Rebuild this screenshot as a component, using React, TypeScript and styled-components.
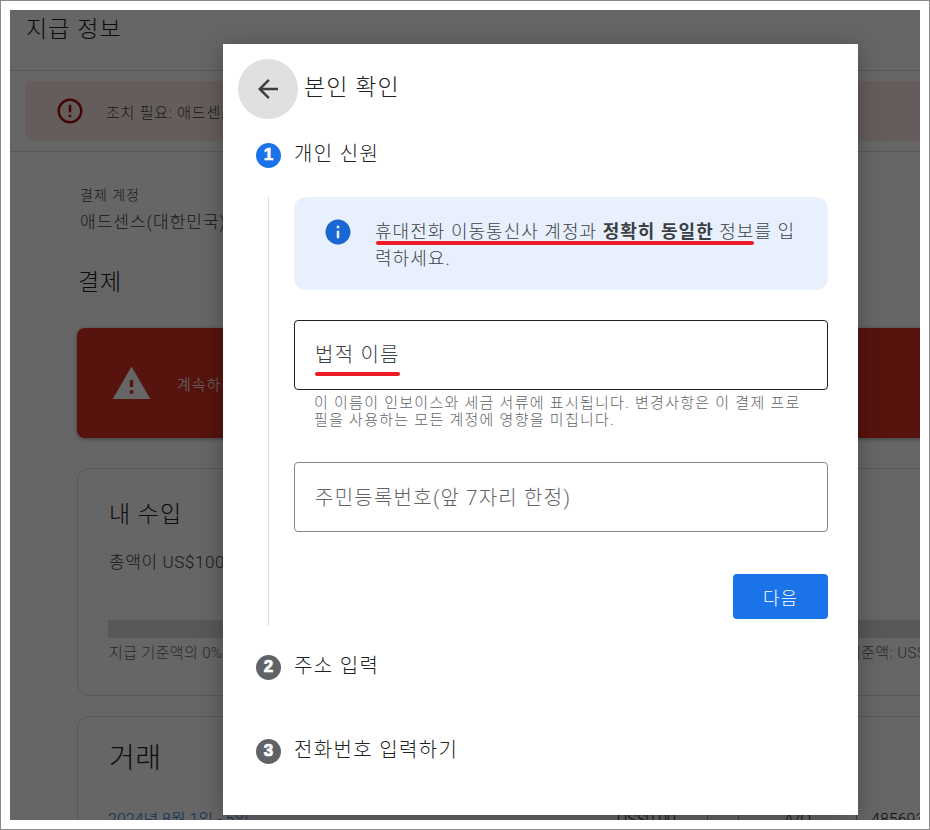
import React from "react";
import styled, { createGlobalStyle } from "styled-components";

const Global = createGlobalStyle`
  html, body { margin: 0; padding: 0; background: #fff; }
  * { box-sizing: border-box; }
  body { font-family: Roboto, "Noto Sans CJK KR", "Liberation Sans", sans-serif; font-weight: 300; }
  strong { font-weight: 700; }
`;

const Frame = styled.div`
  width: 930px;
  height: 830px;
  border: 1px solid #8a8a8a;
  padding: 9px;
  background: #fff;
`;

const Page = styled.div`
  position: relative;
  width: 910px;
  height: 810px;
  overflow: hidden;
  background: #fff;
  color: #202124;
`;

const PageHeader = styled.header`
  height: 61px;
  padding: 2px 16px 0;
  border-bottom: 1px solid #dadce0;
  font-size: 23px;
  letter-spacing: 1.1px;
  line-height: 36px;
`;

const AlertBand = styled.div`
  height: 81px;
  padding: 10px 0 10px 15px;
  border-bottom: 1px solid #dadce0;
`;

const AlertBox = styled.div`
  display: flex;
  align-items: center;
  gap: 21px;
  height: 60px;
  padding-left: 30px;
  width: 1000px;
  border-radius: 8px;
  background: #fce8e6;
  font-size: 15px;
  letter-spacing: 0.8px;
  color: #3c4043;
`;

const Content = styled.main`
  width: 1000px;
  padding: 33px 0 0 67px;
`;

const AccountLabel = styled.div`
  margin-left: 3px;
  font-size: 14px;
  letter-spacing: 1px;
  line-height: 20px;
  color: #3c4043;
`;

const AccountName = styled.div`
  margin-left: 3px;
  margin-top: 6px;
  font-size: 17px;
  letter-spacing: 1px;
  line-height: 22px;
  color: #3c4043;
`;

const SectionTitle = styled.h2`
  margin: 33px 0 0 1px;
  font-size: 23px;
  font-weight: 300;
  letter-spacing: 0.8px;
  line-height: 34px;
`;

const DangerBox = styled.div`
  display: flex;
  align-items: center;
  gap: 25px;
  height: 110px;
  margin-top: 28px;
  padding-left: 34px;
  border-radius: 8px;
  background: #d93025;
  color: #fff;
  font-size: 15px;
  letter-spacing: 1px;
  box-shadow: 0 1px 4px rgba(0, 0, 0, 0.4);
`;

const Card = styled.section`
  margin-top: ${(p: { $top: number }) => p.$top}px;
  padding: 26px 0 0 31px;
  border: 1px solid #dadce0;
  border-radius: 12px;
`;

const EarnCard = styled(Card)`
  height: 228px;
  padding-right: 36px;
`;

const CardTitle = styled.h3`
  margin: 0;
  font-size: 23px;
  font-weight: 300;
  letter-spacing: 1px;
  line-height: 40px;
`;

const TotalLine = styled.div`
  margin-top: 12px;
  font-size: 17px;
  letter-spacing: 0.6px;
  line-height: 30px;
  color: #3c4043;
`;

const ProgressBar = styled.div`
  height: 18px;
  margin: 43px -37px 0 -1px;
  background: #dcdcdc;
`;

const ProgressLabels = styled.div`
  display: flex;
  justify-content: space-between;
  margin-top: 4px;
  font-size: 15px;
  letter-spacing: 0.4px;
  line-height: 22px;
  color: #5f6368;
`;

const TxCard = styled(Card)`
  height: 140px;
  padding-top: 22px;
`;

const TxTitle = styled.h3`
  margin: 0;
  font-size: 28px;
  font-weight: 300;
  letter-spacing: 0.5px;
  line-height: 40px;
`;

const TxRow = styled.div`
  display: grid;
  grid-template-columns: 598px 31px 118px 1fr;
  height: 30px;
  margin-top: 29px;
  font-size: 16px;
  line-height: 24px;
`;

const TxDateCell = styled.div`
  display: flex;
  justify-content: space-between;
  padding-right: 31px;
  margin-left: -1px;
`;

const TxLink = styled.span`
  color: #1a73e8;
`;

const TxCell = styled.div`
  border-left: 1px solid #9a9a9a;
  text-align: ${(p: { $center?: boolean }) => (p.$center ? "center" : "left")};
  padding-left: ${(p: { $center?: boolean }) => (p.$center ? "0" : "14px")};
`;

const Overlay = styled.div`
  position: absolute;
  inset: 0;
  background: rgba(0, 0, 0, 0.6);
`;

const Modal = styled.div`
  position: absolute;
  left: 213px;
  top: 34px;
  width: 635px;
  height: 771px;
  padding: 15px 30px 0 15px;
  background: #fff;
  box-shadow: 0 4px 24px rgba(0, 0, 0, 0.28);
  color: #202124;
`;

const ModalHeader = styled.div`
  display: flex;
  align-items: center;
  gap: 6px;
  height: 60px;
`;

const BackButton = styled.button`
  display: flex;
  align-items: center;
  justify-content: center;
  width: 60px;
  height: 60px;
  padding: 0;
  border: none;
  border-radius: 50%;
  background: #e0e0e0;
  color: #3c4043;
`;

const ModalTitle = styled.h1`
  margin: -2px 0 0;
  font-size: 23px;
  font-weight: 300;
  letter-spacing: 1.1px;
  line-height: 30px;
`;

const StepRow = styled.div`
  display: flex;
  align-items: center;
  gap: 13px;
  height: 26px;
  margin-left: 18px;
  margin-top: ${(p: { $top: number }) => p.$top}px;
`;

const StepBadge = styled.span`
  display: flex;
  align-items: center;
  justify-content: center;
  flex: none;
  width: 25px;
  height: 25px;
  border-radius: 50%;
  background: ${(p: { $active?: boolean }) => (p.$active ? "#1a73e8" : "#5f6368")};
  color: #fff;
  font-family: "Liberation Sans", sans-serif;
  font-size: 17px;
  font-weight: 700;
  -webkit-text-stroke: 0.7px #fff;
`;

const StepLabel = styled.span`
  margin-top: -2px;
  font-size: 20px;
  letter-spacing: 1.35px;
  line-height: 26px;
`;

const StepBody = styled.div`
  width: 560px;
  height: 429px;
  margin: 29px 0 0 30px;
  padding-left: 25px;
  border-left: 1px solid #dadce0;
`;

const InfoBox = styled.div`
  display: flex;
  gap: 22px;
  height: 93px;
  padding: 21px 28px 0 29px;
  border-radius: 12px;
  background: #e8f0fe;
`;

const InfoIcon = styled.svg`
  flex: none;
  width: 30px;
  height: 30px;
  margin: -1px 0 0 0;
  fill: #1967d2;
`;

const InfoText = styled.p`
  margin: 0;
  font-size: 18px;
  letter-spacing: 1.05px;
  line-height: 27px;
  color: #3c4043;
`;

const Marked = styled.span`
  position: relative;
  &::after {
    content: "";
    position: absolute;
    left: 1px;
    right: 0;
    bottom: -3px;
    height: 4px;
    border-radius: 2px;
    background: #ed1c24;
  }
`;

const FieldMark = styled(Marked)`
  &::after {
    left: 0;
    bottom: -8px;
  }
`;

const Field = styled.div`
  display: flex;
  align-items: center;
  height: 70px;
  margin-top: ${(p: { $top: number }) => p.$top}px;
  padding: 0 0 ${(p: { $focused?: boolean; $top: number }) => (p.$focused ? "4px" : "2px")} 20px;
  border: 1px solid ${(p: { $focused?: boolean; $top: number }) => (p.$focused ? "#202124" : "#80868b")};
  border-radius: 4px;
  font-size: 20px;
  letter-spacing: 1.25px;
  color: ${(p: { $focused?: boolean; $top: number }) => (p.$focused ? "#3c4043" : "#5f6368")};
`;

const Helper = styled.p`
  margin: 5px 21px 0 20px;
  font-size: 15px;
  letter-spacing: 1.28px;
  line-height: 17px;
  color: #5f6368;
`;

const Actions = styled.div`
  display: flex;
  justify-content: flex-end;
  margin-top: 42px;
`;

const NextButton = styled.button`
  width: 95px;
  height: 45px;
  border: none;
  border-radius: 4px;
  background: #1a73e8;
  color: #fff;
  font: inherit;
  font-size: 18px;
  letter-spacing: 1px;
`;

export default function App() {
  return (
    <>
      <Global />
      <Frame>
        <Page>
          <PageHeader>지급 정보</PageHeader>
          <AlertBand>
            <AlertBox>
              <svg width="30" height="30" viewBox="0 0 24 24" fill="#a50e0e">
                <path d="M11 15h2v2h-2zm0-8h2v6h-2zm.99-5C6.47 2 2 6.48 2 12s4.47 10 9.99 10C17.52 22 22 17.52 22 12S17.52 2 11.99 2zM12 20c-4.42 0-8-3.58-8-8s3.58-8 8-8 8 3.58 8 8-3.58 8-8 8z" />
              </svg>
              조치 필요: 애드센스 계정을 확인하세요
            </AlertBox>
          </AlertBand>
          <Content>
            <AccountLabel>결제 계정</AccountLabel>
            <AccountName>애드센스(대한민국)</AccountName>
            <SectionTitle>결제</SectionTitle>
            <DangerBox>
              <svg width="41" height="41" viewBox="0 0 24 24" fill="#fff">
                <path d="M1 21h22L12 2 1 21zm12-3h-2v-2h2v2zm0-4h-2v-4h2v4z" />
              </svg>
              계속하려면 본인 확인을 완료하세요
            </DangerBox>
            <EarnCard $top={30}>
              <CardTitle>내 수입</CardTitle>
              <TotalLine>총액이 US$100에 도달하면 지급됩니다</TotalLine>
              <ProgressBar />
              <ProgressLabels>
                <span>지급 기준액의 0%</span>
                <span>지급 기준액: US$100.00</span>
              </ProgressLabels>
            </EarnCard>
            <TxCard $top={20}>
              <TxTitle>거래</TxTitle>
              <TxRow>
                <TxDateCell>
                  <TxLink>2024년 8월 1일 - 5일</TxLink>
                  <span>US$0.00</span>
                </TxDateCell>
                <TxCell />
                <TxCell $center>A/O</TxCell>
                <TxCell>485693</TxCell>
              </TxRow>
            </TxCard>
          </Content>
          <Overlay />
          <Modal>
            <ModalHeader>
              <BackButton aria-label="뒤로">
                <svg width="30" height="30" viewBox="0 0 24 24" fill="currentColor">
                  <path d="M20 11H7.83l5.59-5.59L12 4l-8 8 8 8 1.41-1.41L7.83 13H20v-2z" />
                </svg>
              </BackButton>
              <ModalTitle>본인 확인</ModalTitle>
            </ModalHeader>
            <StepRow $top={23}>
              <StepBadge $active>1</StepBadge>
              <StepLabel>개인 신원</StepLabel>
            </StepRow>
            <StepBody>
              <InfoBox>
                <InfoIcon viewBox="0 0 24 24">
                  <path d="M12 2C6.48 2 2 6.48 2 12s4.48 10 10 10 10-4.48 10-10S17.52 2 12 2zm1 15h-2v-6h2v6zm0-8h-2V7h2v2z" />
                </InfoIcon>
                <InfoText>
                  <Marked>
                    휴대전화 이동통신사 계정과 <strong>정확히 동일한</strong> 정보
                  </Marked>
                  를 입력하세요.
                </InfoText>
              </InfoBox>
              <Field $top={30} $focused>
                <FieldMark>법적 이름</FieldMark>
              </Field>
              <Helper>
                이 이름이 인보이스와 세금 서류에 표시됩니다. 변경사항은 이 결제 프로필을 사용하는 모든 계정에 영향을 미칩니다.
              </Helper>
              <Field $top={33}>주민등록번호(앞 7자리 한정)</Field>
              <Actions>
                <NextButton>다음</NextButton>
              </Actions>
            </StepBody>
            <StepRow $top={28}>
              <StepBadge>2</StepBadge>
              <StepLabel>주소 입력</StepLabel>
            </StepRow>
            <StepRow $top={58}>
              <StepBadge>3</StepBadge>
              <StepLabel>전화번호 입력하기</StepLabel>
            </StepRow>
          </Modal>
        </Page>
      </Frame>
    </>
  );
}
